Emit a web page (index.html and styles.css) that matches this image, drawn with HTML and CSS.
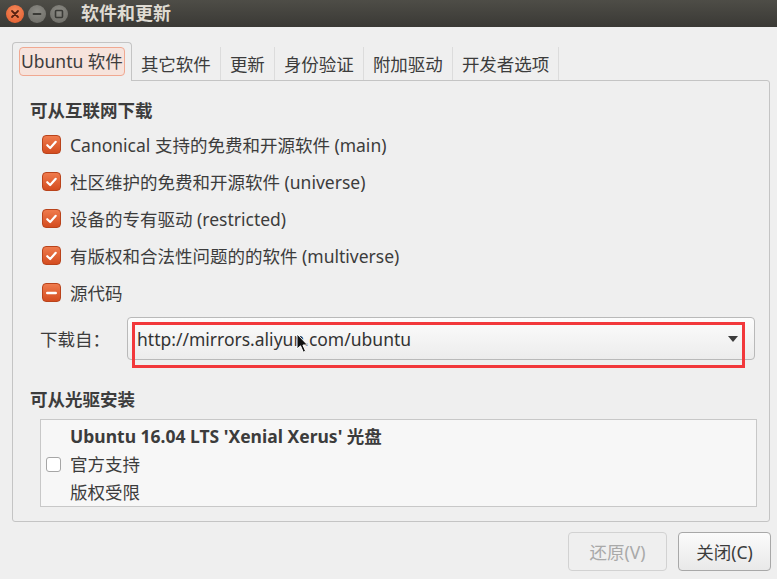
FILE: index.html
```html
<!DOCTYPE html>
<html>
<head>
<meta charset="utf-8">
<link rel="stylesheet" href="styles.css">
</head>
<body>
<div class="titlebar">
  <div class="wbtns">
    <span class="wbtn close"><svg width="18" height="18" viewBox="0 0 18 18"><path d="M6 6 L12 12 M12 6 L6 12" stroke="#5a2210" stroke-width="1.8" stroke-linecap="round"/></svg></span>
    <span class="wbtn"><svg width="18" height="18" viewBox="0 0 18 18"><path d="M5.5 9 H12.5" stroke="#3a3a36" stroke-width="1.8" stroke-linecap="round"/></svg></span>
    <span class="wbtn"><svg width="18" height="18" viewBox="0 0 18 18"><rect x="5.5" y="5.5" width="7" height="7" rx="1" fill="none" stroke="#3a3a36" stroke-width="1.6"/></svg></span>
  </div>
  <div class="title">软件和更新</div>
</div>

<div class="window">
  <div class="tabs">
    <div class="tab active"><span class="focus">Ubuntu 软件</span></div>
    <div class="tab">其它软件</div>
    <div class="tab">更新</div>
    <div class="tab">身份验证</div>
    <div class="tab">附加驱动</div>
    <div class="tab">开发者选项</div>
  </div>
  <div class="panel">
    <div class="heading">可从互联网下载</div>
    <div class="checks">
      <div class="row"><span class="cb on"><svg width="18" height="18" viewBox="0 0 18 18"><path d="M4.5 9.2 L7.6 12.2 L13.5 5.6" fill="none" stroke="#fff" stroke-width="2.3" stroke-linecap="round" stroke-linejoin="round"/></svg></span>Canonical 支持的免费和开源软件 (main)</div>
      <div class="row"><span class="cb on"><svg width="18" height="18" viewBox="0 0 18 18"><path d="M4.5 9.2 L7.6 12.2 L13.5 5.6" fill="none" stroke="#fff" stroke-width="2.3" stroke-linecap="round" stroke-linejoin="round"/></svg></span>社区维护的免费和开源软件 (universe)</div>
      <div class="row"><span class="cb on"><svg width="18" height="18" viewBox="0 0 18 18"><path d="M4.5 9.2 L7.6 12.2 L13.5 5.6" fill="none" stroke="#fff" stroke-width="2.3" stroke-linecap="round" stroke-linejoin="round"/></svg></span>设备的专有驱动 (restricted)</div>
      <div class="row"><span class="cb on"><svg width="18" height="18" viewBox="0 0 18 18"><path d="M4.5 9.2 L7.6 12.2 L13.5 5.6" fill="none" stroke="#fff" stroke-width="2.3" stroke-linecap="round" stroke-linejoin="round"/></svg></span>有版权和合法性问题的的软件 (multiverse)</div>
      <div class="row"><span class="cb on"><svg width="18" height="18" viewBox="0 0 18 18"><path d="M4.5 9 H13.5" fill="none" stroke="#fff" stroke-width="2.6" stroke-linecap="round"/></svg></span>源代码</div>
    </div>
    <div class="download">
      <span class="dl-label">下载自：</span>
      <div class="combo">
        <span class="combo-text">http://mirrors.aliyun.com/ubuntu</span>
        <svg class="combo-arrow" width="10" height="6" viewBox="0 0 10 6"><path d="M0 0 H10 L5 6 Z" fill="#3c3c3c"/></svg>
        <div class="mark"></div>
        <svg class="cursor" width="13" height="21" viewBox="0 0 13 21"><path d="M1 1 L1 16 L4.5 12.8 L7.3 19.2 L9.6 18.2 L6.9 12 L11.6 12 Z" fill="#111" stroke="#fff" stroke-width="1" stroke-linejoin="round"/></svg>
      </div>
    </div>
    <div class="heading h2">可从光驱安装</div>
    <div class="listbox">
      <span class="cb off"></span>
      <div class="disc-title">Ubuntu 16.04 LTS 'Xenial Xerus' 光盘</div>
      <div class="disc-line">官方支持</div>
      <div class="disc-line">版权受限</div>
    </div>
  </div>
  <div class="buttons">
    <button class="btn disabled">还原(V)</button>
    <button class="btn close-btn">关闭(C)</button>
  </div>
</div>
</body>
</html>
```

FILE: styles.css
```css
* { box-sizing: border-box; }

body {
  margin: 0;
  width: 777px;
  height: 579px;
  overflow: hidden;
  background: #efefef;
  font-family: "Noto Sans", "Noto Sans CJK SC", sans-serif;
  font-size: 17.5px;
  color: #3c3c3c;
}

.titlebar {
  height: 27px;
  background: linear-gradient(#4e4d47, #3a3935);
  display: flex;
  align-items: center;
  padding-left: 6px;
}

.wbtns {
  display: flex;
  gap: 4px;
}

.wbtn {
  width: 18px;
  height: 18px;
  border-radius: 50%;
  background: radial-gradient(circle at 50% 35%, #8c8b85, #6a6963);
  display: flex;
}

.wbtn.close {
  background: radial-gradient(circle at 50% 35%, #f58a5c, #e1592a);
}

.title {
  margin-left: 13px;
  color: #dfdbd2;
  font-weight: bold;
  font-size: 18px;
  line-height: 27px;
}

.window {
  padding: 15px 7px 0 12px;
}

.tabs {
  display: flex;
  align-items: flex-end;
  height: 38px;
  position: relative;
  z-index: 1;
}

.tab {
  height: 33px;
  display: flex;
  align-items: center;
  padding: 0 9px;
  border-right: 1px solid #dcdcdc;
  color: #3c3c3c;
  white-space: nowrap;
}

.tab.active {
  height: 39px;
  margin-bottom: -1px;
  padding: 4px 6px 0;
  border: 1px solid #c4c4c4;
  border-bottom: none;
  border-radius: 4px 4px 0 0;
  background: #efefef;
  align-items: flex-start;
}

.focus {
  display: block;
  height: 29px;
  line-height: 27px;
  padding: 0 1px;
  border: 1px solid #f0a891;
  border-radius: 4px;
  background: #f6e3dc;
}

.panel {
  height: 442px;
  border: 1px solid #c4c4c4;
  border-radius: 0 3px 3px 3px;
  padding: 17px 0 0 17px;
}

.heading {
  font-weight: bold;
  line-height: 24px;
  height: 24px;
}

.checks {
  margin-top: 4px;
  padding-left: 12px;
}

.row {
  height: 37px;
  display: flex;
  align-items: center;
  white-space: nowrap;
}

.cb {
  width: 19px;
  height: 19px;
  border-radius: 4px;
  flex: none;
  display: flex;
  align-items: center;
  justify-content: center;
}

.cb.on {
  margin-right: 9px;
  background: linear-gradient(#ef7b4d, #d44c1f);
  border: 1px solid #b9431b;
}

.download {
  margin-top: 6px;
  padding-left: 10px;
  display: flex;
  align-items: center;
}

.dl-label {
  width: 87px;
}

.combo {
  position: relative;
  width: 628px;
  height: 43px;
  border: 1px solid #b9b9b9;
  border-radius: 4px;
  background: linear-gradient(#fcfcfc, #ececec);
  display: flex;
  align-items: center;
  padding: 0 16px 0 9px;
  justify-content: space-between;
}

.combo-text {
  color: #333;
}

.mark {
  position: absolute;
  left: 4px;
  top: 4px;
  width: 613px;
  height: 46px;
  border: 3px solid #f2383b;
}

.cursor {
  position: absolute;
  left: 168px;
  top: 15px;
}

.h2 {
  margin-top: 27px;
}

.listbox {
  margin: 8px 0 0 10px;
  width: 717px;
  height: 88px;
  border: 1px solid #c8c8c8;
  background: #f7f7f7;
  padding-top: 2px;
  display: grid;
  grid-template-columns: 29px 1fr;
  grid-template-rows: 28px 28px 28px;
}

.cb.off {
  grid-column: 1;
  grid-row: 1 / 4;
  align-self: center;
  justify-self: start;
  margin-left: 5px;
  width: 15px;
  height: 15px;
  border: 1px solid #a6a6a6;
  border-radius: 3px;
  background: #fff;
}

.disc-title {
  grid-column: 2;
  font-weight: bold;
  line-height: 28px;
}

.disc-line {
  grid-column: 2;
  line-height: 28px;
}

.buttons {
  display: flex;
  justify-content: flex-end;
  gap: 11px;
  margin-top: 10px;
  margin-right: -1px;
}

.btn {
  font-family: inherit;
  font-size: 17.5px;
  height: 39px;
  border-radius: 4px;
  border: 1px solid #a8a8a8;
  background: linear-gradient(#fbfbfb, #e9e9e9);
  color: #3c3c3c;
  padding: 0;
}

.btn.disabled {
  width: 99px;
  color: #a9a9a9;
  border-color: #d2d2d2;
  background: #efefef;
}

.close-btn {
  width: 93px;
}
```
